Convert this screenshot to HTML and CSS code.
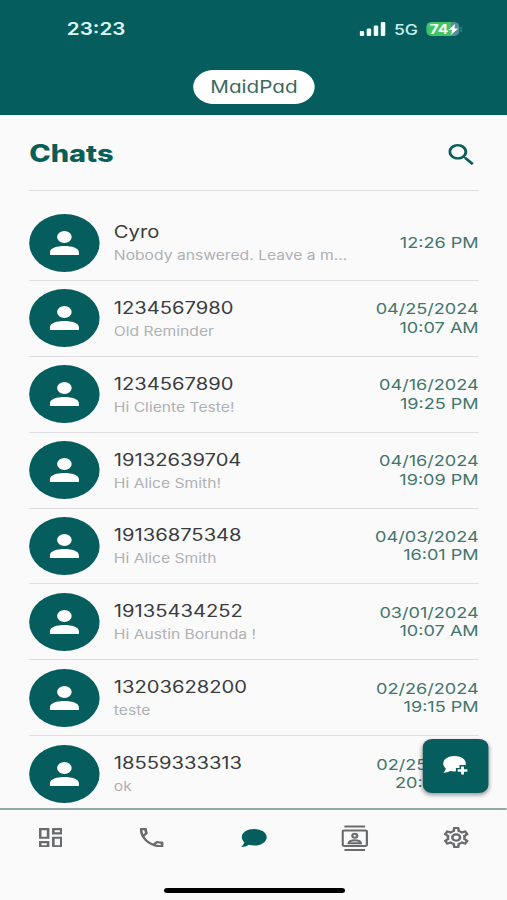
FILE: index.html
```html
<!DOCTYPE html>
<html lang="en">
<head>
<meta charset="utf-8">
<title>MaidPad</title>
<link rel="stylesheet" href="styles.css">
</head>
<body>
<svg class="defs" width="0" height="0">
  <symbol id="person" viewBox="0 0 24 24"><circle cx="12" cy="6" r="6"/><path d="M0 24v-2.500c0-4.500 6-6.500 12-6.500s12 2 12 6.500v2.500z"/></symbol>
</svg>
<div class="app">
  <header class="top">
    <div class="status">
      <span class="clock">23:23</span>
      <div class="indicators">
        <svg class="signal" width="22" height="14" viewBox="0 0 22 14"><rect x="0" y="9" width="3.700" height="5" rx="1"/><rect x="5.800" y="6.500" width="3.700" height="7.500" rx="1"/><rect x="11.600" y="3.500" width="3.700" height="10.500" rx="1"/><rect x="17.400" y="0" width="3.700" height="14" rx="1"/></svg>
        <span class="network">5G</span>
        <div class="battery"><span>74</span><svg width="8" height="11" viewBox="0 0 8 11"><path d="M5.500 0 0 6h3L2.200 11 8 4.500H5z"/></svg></div>
        <i class="nub"></i>
      </div>
    </div>
    <div class="brand"><span>MaidPad</span></div>
  </header>
  <main class="content">
    <div class="heading">
      <h1>Chats</h1>
      <svg class="search" width="21" height="21" viewBox="3 3 17.490 17.490"><path d="M15.500 14h-.79l-.28-.27C15.410 12.590 16 11.110 16 9.500 16 5.910 13.090 3 9.500 3S3 5.910 3 9.500 5.910 16 9.500 16c1.610 0 3.090-.59 4.230-1.570l.27.28v.79l5 4.990L20.490 19l-4.990-5zm-6 0C7.010 14 5 11.990 5 9.500S7.010 5 9.500 5 14 7.010 14 9.500 11.990 14 9.500 14z"/></svg>
    </div>
    <ul class="chats">
      <li><div class="avatar"><svg><use href="#person"/></svg></div><div class="info"><b>Cyro</b><p>Nobody answered. Leave a m...</p></div><time>12:26 PM</time></li>
      <li><div class="avatar"><svg><use href="#person"/></svg></div><div class="info"><b>1234567980</b><p>Old Reminder</p></div><time>04/25/2024<br>10:07 AM</time></li>
      <li><div class="avatar"><svg><use href="#person"/></svg></div><div class="info"><b>1234567890</b><p>Hi Cliente Teste!</p></div><time>04/16/2024<br>19:25 PM</time></li>
      <li><div class="avatar"><svg><use href="#person"/></svg></div><div class="info"><b>19132639704</b><p>Hi Alice Smith!</p></div><time>04/16/2024<br>19:09 PM</time></li>
      <li><div class="avatar"><svg><use href="#person"/></svg></div><div class="info"><b>19136875348</b><p>Hi Alice Smith</p></div><time>04/03/2024<br>16:01 PM</time></li>
      <li><div class="avatar"><svg><use href="#person"/></svg></div><div class="info"><b>19135434252</b><p>Hi Austin Borunda !</p></div><time>03/01/2024<br>10:07 AM</time></li>
      <li><div class="avatar"><svg><use href="#person"/></svg></div><div class="info"><b>13203628200</b><p>teste</p></div><time>02/26/2024<br>19:15 PM</time></li>
      <li><div class="avatar"><svg><use href="#person"/></svg></div><div class="info"><b>18559333313</b><p>ok</p></div><time>02/25/2024<br>20:40 PM</time></li>
    </ul>
    <button class="fab" aria-label="New chat"><svg width="22" height="22" viewBox="0 0 22 22"><path d="M10 1C4.800 1 .800 4.200.800 8.500c0 2 .900 3.800 2.200 5.200-.3 1.500-1 2.800-2.200 4 2.200 0 4.200-.6 5.700-1.700 1.100.300 2.300.500 3.500.500 5.200 0 9.400-3.500 9.400-8S15.200 1 10 1z"/><path class="cut" d="M16.700 10v11M11.200 15.500h11"/><path class="plus" d="M16.700 11.500v8M12.700 15.500h8"/></svg></button>
  </main>
  <nav class="tabs">
    <a><svg width="19.500" height="19.500" viewBox="3 3 18 18"><path d="M19 5v2h-4V5h4M9 5v6H5V5h4m10 8v6h-4v-6h4M9 17v2H5v-2h4M21 3h-8v6h8V3zM11 3H3v10h8V3zm10 8h-8v10h8V11zm-10 4H3v6h8v-6z"/></svg></a>
    <a><svg width="19.500" height="19.500" viewBox="3 3 18 18"><path d="M6.540 5c.06.89.21 1.760.45 2.590l-1.200 1.200c-.41-1.200-.67-2.470-.76-3.790h1.510m9.860 12.020c.85.24 1.720.39 2.600.45v1.490c-1.320-.09-2.590-.35-3.800-.75l1.200-1.190M7.500 3H4c-.55 0-1 .45-1 1 0 9.390 7.610 17 17 17 .55 0 1-.45 1-1v-3.490c0-.55-.45-1-1-1-1.240 0-2.450-.2-3.570-.57-.1-.04-.21-.05-.31-.05-.26 0-.51.1-.71.29l-2.200 2.200c-2.830-1.450-5.150-3.760-6.590-6.590l2.200-2.200c.28-.28.36-.67.25-1.020C8.700 6.450 8.500 5.250 8.500 4c0-.55-.45-1-1-1z"/></svg></a>
    <a class="active"><svg width="22" height="20" viewBox="0 0 22 20"><path d="M11.300 1C5.600 1 1 4.400 1 9c0 2 .800 3.900 2.100 5.300C2.700 16 1.800 17.600.500 19c2.500 0 4.700-.8 6.300-2.200 1.400.500 2.900.700 4.500.700 5.700 0 10.200-3.700 10.200-8.300S17 1 11.300 1z"/></svg></a>
    <a><svg class="outline" width="22" height="26" viewBox="0 0 22 26"><rect x="1" y="5.500" width="20" height="15.500" rx="1.500"/><path d="M2.500 1.500h17M2.500 25h17M6 18.200c.5-4 9.500-4 10 0z"/><circle cx="11" cy="10.800" r="2"/></svg></a>
    <a><svg width="21" height="21" viewBox="2 2 20 20"><path d="M19.430 12.980c.04-.32.07-.64.07-.98s-.03-.66-.07-.98l2.110-1.650c.19-.15.24-.42.12-.64l-2-3.460c-.09-.16-.26-.25-.44-.25-.06 0-.12.01-.17.03l-2.490 1c-.52-.4-1.080-.73-1.690-.98l-.38-2.650C14.460 2.180 14.250 2 14 2h-4c-.25 0-.46.18-.49.42l-.38 2.650c-.61.25-1.170.59-1.690.98l-2.490-1c-.06-.02-.12-.03-.18-.03-.17 0-.34.09-.43.25l-2 3.460c-.13.22-.07.49.12.64l2.110 1.650c-.04.32-.07.65-.07.98s.03.66.07.98l-2.110 1.650c-.19.15-.24.42-.12.64l2 3.460c.09.16.26.25.44.25.06 0 .12-.01.17-.03l2.490-1c.52.4 1.080.73 1.690.98l.38 2.650c.03.24.24.42.49.42h4c.25 0 .46-.18.49-.42l.38-2.650c.61-.25 1.170-.59 1.690-.98l2.490 1c.06.02.12.03.18.03.17 0 .34-.09.43-.25l2-3.460c.12-.22.07-.49-.12-.64l-2.110-1.650zm-1.980-1.710c.04.31.05.52.05.73s-.02.43-.05.73l-.14 1.130.89.7 1.080.84-.7 1.210-1.270-.51-1.040-.42-.9.68c-.43.32-.84.56-1.250.73l-1.060.43-.16 1.130-.2 1.350h-1.400l-.19-1.350-.16-1.130-1.060-.43c-.43-.18-.83-.41-1.230-.71l-.91-.7-1.060.43-1.270.51-.7-1.210 1.080-.84.89-.7-.14-1.130c-.03-.31-.05-.54-.05-.74s.02-.43.05-.73l.14-1.130-.89-.7-1.080-.84.7-1.210 1.270.51 1.040.42.9-.68c.43-.32.84-.56 1.250-.73l1.060-.43.16-1.130.2-1.350h1.390l.19 1.350.16 1.130 1.060.43c.43.18.83.41 1.230.71l.91.7 1.060-.43 1.270-.51.7 1.210-1.070.85-.89.7.14 1.130zM12 8c-2.210 0-4 1.790-4 4s1.790 4 4 4 4-1.790 4-4-1.790-4-4-4zm0 6c-1.100 0-2-.9-2-2s.9-2 2-2 2 .9 2 2-.9 2-2 2z"/></svg></a>
  </nav>
  <div class="home"></div>
</div>
</body>
</html>
```
FILE: styles.css
```css
* { box-sizing: border-box; }
html, body { margin: 0; width: 507px; height: 900px; overflow: hidden; background: #fafafb; }
.defs { display: block; height: 0; }
.app {
  width: 418px; height: 900px;
  transform: scaleX(1.215); transform-origin: 0 0;
  display: flex; flex-direction: column;
  font-family: Inter, "Liberation Sans", sans-serif;
  background: #fafafb; color: #3b3c3e;
}
.top { height: 115px; background: #055e5d; flex: none; }
.status { display: flex; justify-content: space-between; height: 69.500px; padding: 18px 38px 0 55px; }
.clock { font-size: 17px; font-weight: 600; line-height: 23px; color: #dcf7f5; }
.indicators { display: flex; align-items: center; height: 22px; }
.signal { fill: #f0fffd; }
.network { font-size: 14.500px; font-weight: 500; color: #c7eeee; margin: 1px 6.500px 0 6.500px; }
.battery { display: flex; align-items: center; width: 27px; height: 14.500px; border-radius: 4.500px; padding-left: 3px; background: linear-gradient(90deg, #43c468 74%, #578d94 74%); color: #f0fff0; font-size: 13px; font-weight: 700; }
.battery svg { fill: #fff; }
.nub { width: 1.500px; height: 5px; margin-left: 1px; border-radius: 1px; background: #43878a; }
.brand { width: 100px; height: 34px; margin: 0 auto; border-radius: 17px; background: #fff; display: flex; align-items: center; justify-content: center; }
.brand span { font-size: 17px; line-height: 34px; color: #39695f; font-feature-settings: "cv11"; padding-top: 1px; }
.content { position: relative; height: 693px; overflow: hidden; padding: 0 24px 0 24px; flex: none; }
.heading { height: 76.400px; display: flex; align-items: center; justify-content: space-between; border-bottom: 1px solid #dcdedf; padding: 3px 4px 0 0; }
h1 { margin: 0; font-size: 23.800px; line-height: 30px; font-weight: 800; color: #095f58; }
.search { fill: #095f58; }
.chats { list-style: none; margin: 13.800px 0 0; padding: 0; }
.chats li { height: 75.850px; display: flex; align-items: center; border-bottom: 1px solid #dcdedf; }
.avatar { width: 58px; height: 58px; border-radius: 50%; background: #055e5d; display: flex; align-items: center; justify-content: center; }
.avatar svg { width: 24px; height: 24px; fill: #fff; }
.info { flex: 1; margin-left: 11.700px; padding-top: 3px; }
.info b { display: block; font-size: 16.600px; line-height: 22px; font-weight: 400; }
.info p { margin: 2px 0 0; font-size: 12.900px; line-height: 22px; color: #b0b1b3; white-space: nowrap; }
time { font-size: 14.900px; line-height: 18.500px; padding-top: 1px; text-align: right; color: #42756b; white-space: nowrap; }
.fab { position: absolute; right: 16px; bottom: 15px; width: 54.500px; height: 54px; border: 0; border-radius: 8px; background: #055e5d; box-shadow: 0 2px 4px #0006; padding: 0; display: flex; align-items: center; justify-content: center; }
.fab svg { fill: #fff; }
.fab .cut { stroke: #055e5d; stroke-width: 5; }
.fab .plus { stroke: #fff; stroke-width: 2.400; }
.tabs { height: 58px; width: 417.300px; border-top: 2px solid #90aaa5; display: flex; flex: none; padding-bottom: 1px; }
.tabs a { flex: 1; display: flex; align-items: center; justify-content: center; }
.tabs svg { fill: #6a6b6c; }
.tabs .outline { fill: none; stroke: #6a6b6c; stroke-width: 1.900; }
.tabs .active svg { fill: #055e5d; }
.home { width: 149px; height: 5px; border-radius: 3px; background: #000; margin: 21.500px auto 0; }
```
